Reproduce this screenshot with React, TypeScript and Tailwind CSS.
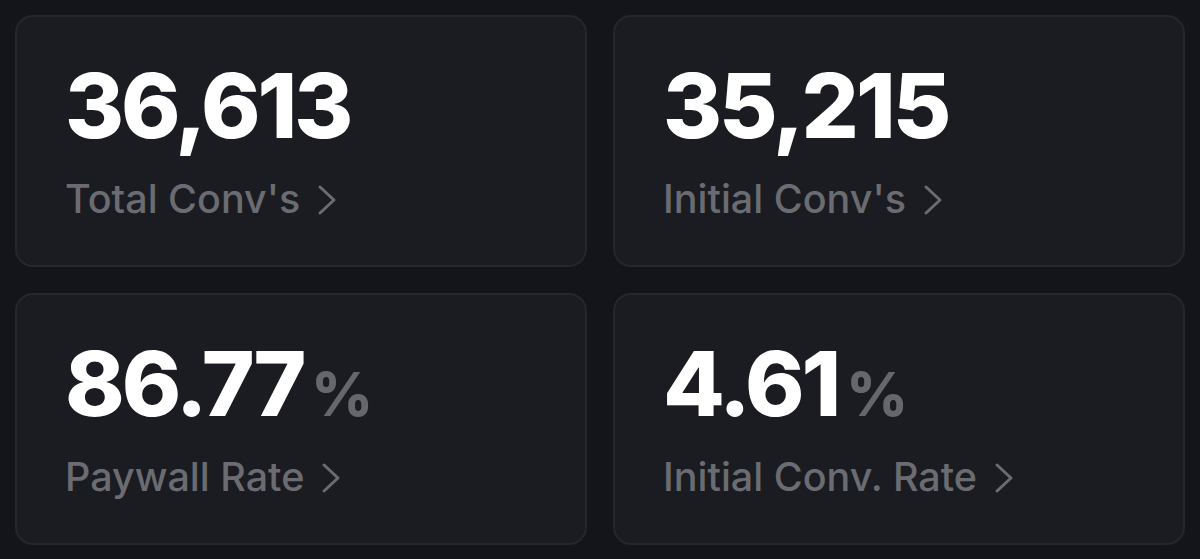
import React from "react";

type Stat = { value: string; label: string; percent?: boolean };

const stats: Stat[] = [
    { value: "36,613", label: "Total Conv's" },
    { value: "35,215", label: "Initial Conv's" },
    { value: "86.77", label: "Paywall Rate", percent: true },
    { value: "4.61", label: "Initial Conv. Rate", percent: true },
];

function Chevron() {
    return (
        <svg width="20" height="32" viewBox="0 0 20 32" fill="none" className="shrink-0">
            <polyline
                points="3,3 17,16 3,29"
                stroke="#6b6c72"
                strokeWidth="3"
                strokeLinecap="round"
                strokeLinejoin="round"
            />
        </svg>
    );
}

function StatCard({ stat }: { stat: Stat }) {
    return (
        <div className="h-[252px] rounded-[18px] border-2 border-[#26272c] bg-[#1b1c21] px-[48px] pt-[44px]">
            <div className="flex items-baseline gap-[8px]">
                <span className="text-[90px] font-extrabold leading-none tracking-[-3px] text-white">{stat.value}</span>
                {stat.percent && (
                    <span className="text-[60px] font-extrabold leading-none text-[#66676d]">%</span>
                )}
            </div>
            <div className="mt-[29px] flex items-center gap-[17px]">
                <span className="text-[39.5px] font-medium leading-none text-[#6b6c72]">{stat.label}</span>
                <Chevron />
            </div>
        </div>
    );
}

export default function App() {
    return (
        <div
            className="min-h-[559px] w-[1200px] bg-[#14151a] p-[15px]"
            style={{ fontFamily: "Inter, 'Noto Sans', sans-serif" }}
        >
            <div className="grid grid-cols-2 gap-x-[26px] gap-y-[26px]">
                {stats.map((s) => (
                    <StatCard key={s.label} stat={s} />
                ))}
            </div>
        </div>
    );
}
